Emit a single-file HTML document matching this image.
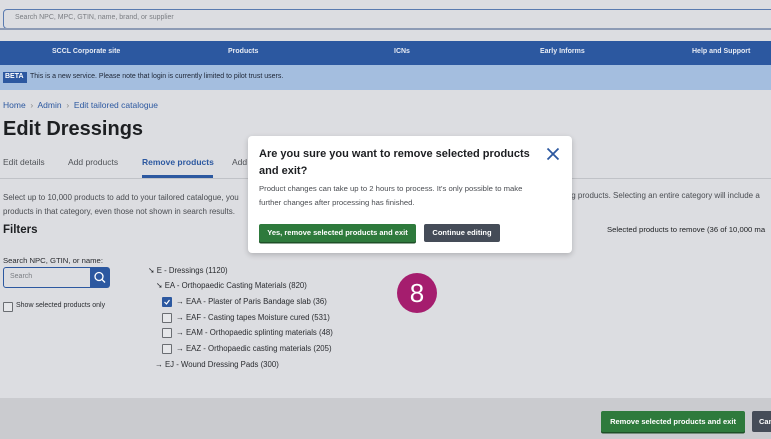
<!DOCTYPE html>
<html><head><style>
*{margin:0;padding:0;box-sizing:border-box}
body{width:771px;height:439px;overflow:hidden;background:#dcdde1;font-family:"Liberation Sans",sans-serif;color:#1d1f22;position:relative}
.a{position:absolute;white-space:nowrap}
.cb{position:absolute;width:10px;height:10px;border:1px solid #6a6d72;background:#e6e7ea;border-radius:1px}
</style></head><body>
<div class="a" style="left:3px;top:9px;width:780px;height:20px;border:1.5px solid #5a7bb0;border-radius:4px;background:#dcdde1"></div>
<div class="a" style="left:15px;top:14px;font-size:7px;color:#7a7d82">Search NPC, MPC, GTIN, name, brand, or supplier</div>
<div class="a" style="left:0;top:28px;width:771px;height:2px;background:#8d9bb5"></div>
<div class="a" style="left:0;top:41px;width:771px;height:24px;background:#2c58a0"></div>
<div class="a" style="left:52px;top:48px;font-size:7px;font-weight:bold;color:#e8ecf4">SCCL Corporate site</div>
<div class="a" style="left:228px;top:48px;font-size:7px;font-weight:bold;color:#e8ecf4">Products</div>
<div class="a" style="left:394px;top:48px;font-size:7px;font-weight:bold;color:#e8ecf4">ICNs</div>
<div class="a" style="left:540px;top:48px;font-size:7px;font-weight:bold;color:#e8ecf4">Early Informs</div>
<div class="a" style="left:692px;top:48px;font-size:7px;font-weight:bold;color:#e8ecf4">Help and Support</div>
<div class="a" style="left:0;top:65px;width:771px;height:25px;background:#a4bedf"></div>
<div class="a" style="left:3px;top:72px;width:24px;height:11px;background:#2c58a0;color:#fff;font-size:7px;font-weight:bold;padding:1px 2px">BETA</div>
<div class="a" style="left:30px;top:73px;font-size:7px;color:#1d2535">This is a new service. Please note that login is currently limited to pilot trust users.</div>
<div class="a" style="left:3px;top:100px;font-size:8.5px;color:#2c58a0">Home &nbsp;<span style="color:#888">›</span>&nbsp; Admin &nbsp;<span style="color:#888">›</span>&nbsp; Edit tailored catalogue</div>
<div class="a" style="left:3px;top:118px;font-size:20px;font-weight:bold;color:#1d1f22">Edit Dressings</div>
<div class="a" style="left:3px;top:157px;font-size:8.5px;color:#505358">Edit details</div>
<div class="a" style="left:68px;top:157px;font-size:8.5px;color:#505358">Add products</div>
<div class="a" style="left:142px;top:157px;font-size:8.5px;color:#2c58a0;font-weight:bold">Remove products</div>
<div class="a" style="left:232px;top:157px;font-size:8.5px;color:#505358">Add</div>
<div class="a" style="left:142px;top:175px;width:71px;height:3px;background:#2c58a0"></div>
<div class="a" style="left:0;top:178px;width:771px;height:1px;background:#c0c2c7"></div>
<div class="a" style="left:3px;top:191px;font-size:8px;color:#4a4d52;line-height:14px">Select up to 10,000 products to add to your tailored catalogue, you<br>products in that category, even those not shown in search results.</div>
<div class="a" style="left:565px;top:191px;font-size:8px;color:#4a4d52">ing products. Selecting an entire category will include a</div>
<div class="a" style="left:3px;top:224px;font-size:11.5px;font-weight:bold">Filters</div>
<div class="a" style="left:607px;top:225px;font-size:7.7px;color:#1d1f22">Selected products to remove (36 of 10,000 ma</div>
<div class="a" style="left:3px;top:256px;font-size:7.7px;color:#2a2c30">Search NPC, GTIN, or name:</div>
<div class="a" style="left:3px;top:267px;width:88px;height:21px;border:1.5px solid #2c58a0;border-radius:3px 0 0 3px;background:#dcdde1;font-size:7px;color:#7a7d82;padding:5px 6px">Search</div>
<div class="a" style="left:90px;top:267px;width:20px;height:21px;background:#2c58a0;border-radius:0 3px 3px 0"><svg width="20" height="21"><circle cx="9" cy="9.5" r="4" fill="none" stroke="#fff" stroke-width="1.3"/><path d="M12 12.5l3 3" stroke="#fff" stroke-width="1.3"/></svg></div>
<div class="cb" style="left:3px;top:302px"></div>
<div class="a" style="left:16px;top:302px;font-size:7px;color:#2a2c30">Show selected products only</div>
<div class="a" style="left:148px;top:266px;font-size:7.8px;color:#2a2c30">➘ E - Dressings (1120)</div>
<div class="a" style="left:156px;top:281px;font-size:7.8px;color:#2a2c30">➘ EA - Orthopaedic Casting Materials (820)</div>
<div class="cb" style="left:162px;top:297px;background:#2c58a0;border-color:#2c58a0"><svg width="8" height="8" style="position:absolute;left:0;top:0"><path d="M1.5 4l2 2 3-4" stroke="#fff" stroke-width="1.2" fill="none"/></svg></div>
<div class="a" style="left:176px;top:297px;font-size:7.8px;color:#2a2c30">→ EAA - Plaster of Paris Bandage slab (36)</div>
<div class="cb" style="left:162px;top:313px"></div>
<div class="a" style="left:176px;top:313px;font-size:7.8px;color:#2a2c30">→ EAF - Casting tapes Moisture cured (531)</div>
<div class="cb" style="left:162px;top:328px"></div>
<div class="a" style="left:176px;top:328px;font-size:7.8px;color:#2a2c30">→ EAM - Orthopaedic splinting materials (48)</div>
<div class="cb" style="left:162px;top:344px"></div>
<div class="a" style="left:176px;top:344px;font-size:7.8px;color:#2a2c30">→ EAZ - Orthopaedic casting materials (205)</div>
<div class="a" style="left:155px;top:360px;font-size:7.8px;color:#2a2c30">→ EJ - Wound Dressing Pads (300)</div>
<div class="a" style="left:397px;top:273px;width:40px;height:40px;border-radius:50%;background:#a51d6e;color:#fff;font-size:26px;text-align:center;line-height:40px">8</div>
<div class="a" style="left:0;top:398px;width:771px;height:41px;background:#cacbcf"></div>
<div class="a" style="left:601px;top:411px;width:144px;height:21px;background:#2e7a3c;border-radius:2px;box-shadow:0 1.5px 0 #1e4f27;color:#fff;font-size:7.5px;font-weight:bold;text-align:center;line-height:21px">Remove selected products and exit</div>
<div class="a" style="left:752px;top:411px;width:40px;height:21px;background:#454c58;border-radius:2px;color:#fff;font-size:7.5px;font-weight:bold;padding-left:7px;line-height:21px">Can</div>
<div class="a" style="left:248px;top:136px;width:324px;height:117px;background:#fff;border-radius:4px;box-shadow:0 2px 6px rgba(0,0,0,.2)">
<div class="a" style="left:11px;top:10px;font-size:11px;font-weight:bold;line-height:17px;color:#1d1f22;white-space:normal;width:286px">Are you sure you want to remove selected products and exit?</div>
<svg class="a" style="left:298px;top:11px" width="14" height="14"><path d="M1.5 1.5l11 11M12.5 1.5l-11 11" stroke="#2c58a0" stroke-width="1.8"/></svg>
<div class="a" style="left:11px;top:46px;font-size:7.7px;line-height:14px;color:#4a4d52">Product changes can take up to 2 hours to process. It's only possible to make<br>further changes after processing has finished.</div>
<div class="a" style="left:11px;top:88px;width:157px;height:18px;background:#2e7a3c;border-radius:2px;box-shadow:0 1.5px 0 #1e4f27;color:#fff;font-size:7.5px;font-weight:bold;text-align:center;line-height:18px">Yes, remove selected products and exit</div>
<div class="a" style="left:176px;top:88px;width:76px;height:18px;background:#454c58;border-radius:2px;color:#fff;font-size:7.5px;font-weight:bold;text-align:center;line-height:18px">Continue editing</div>
</div>
</body></html>
